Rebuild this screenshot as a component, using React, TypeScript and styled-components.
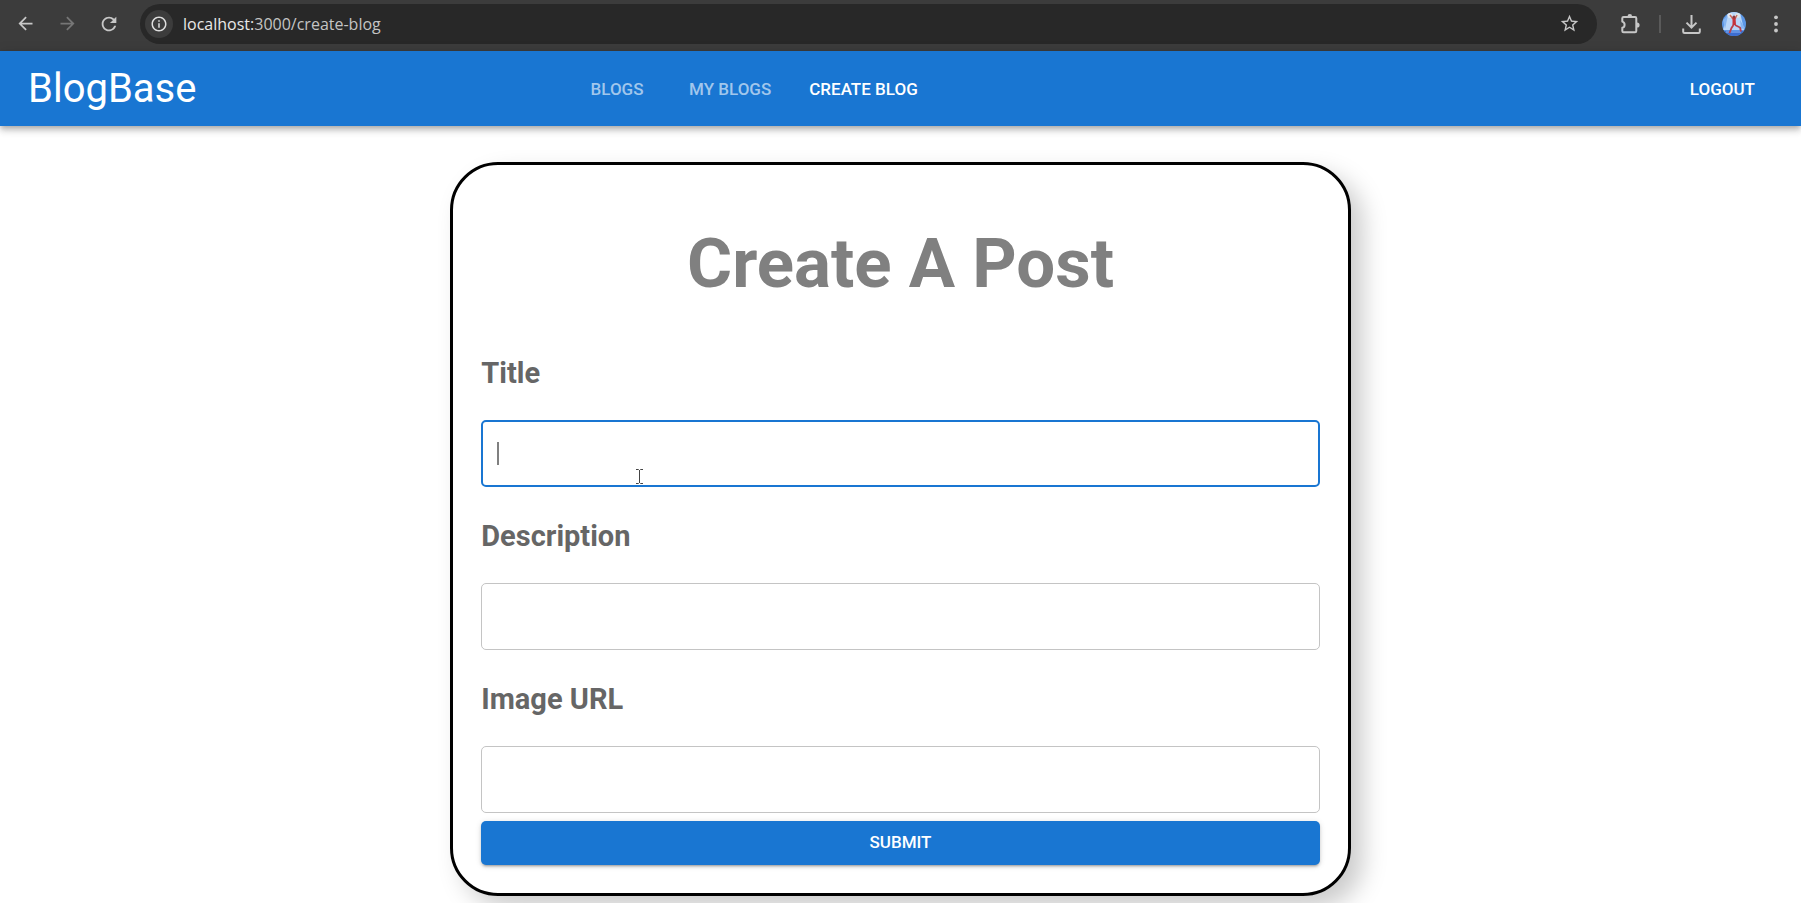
import React from "react";
import styled, { createGlobalStyle } from "styled-components";
import { MdArrowBack, MdArrowForward, MdInfoOutline, MdRefresh, MdStarOutline } from "react-icons/md";

const GlobalStyle = createGlobalStyle`
  *, *::before, *::after { box-sizing: border-box; }
  body {
    margin: 0;
    min-height: 100vh;
    background: #fff;
    font-family: Roboto, "Liberation Sans", sans-serif;
  }
`;

const BrowserBar = styled.div`
  display: flex;
  align-items: center;
  height: 51px;
  padding: 0 12px 4px 12px;
  background: #3c3c3c;
  color: #c7c7c7;
`;

const IconButton = styled.button<{ $dim?: boolean }>`
  display: flex;
  align-items: center;
  justify-content: center;
  width: 26px;
  height: 26px;
  padding: 0;
  border: 0;
  background: none;
  color: ${(p) => (p.$dim ? "#767676" : "#c7c7c7")};
`;

const NavButtons = styled.div`
  display: flex;
  gap: 16px;
`;

const AddressBar = styled.div`
  flex: 1;
  display: flex;
  align-items: center;
  height: 40px;
  margin: 0 20px 0 18px;
  padding: 0 15px 0 5px;
  border-radius: 20px;
  background: #282828;
`;

const SiteInfo = styled.button`
  display: flex;
  align-items: center;
  justify-content: center;
  width: 28px;
  height: 28px;
  padding: 0;
  border: 0;
  border-radius: 50%;
  background: #3c3c3c;
  color: #dedede;
`;

const Address = styled.div`
  flex: 1;
  margin-left: 10px;
  color: #c4c4c4;
  font-family: "Open Sans", "Noto Sans", sans-serif;
  font-size: 16px;
  line-height: 24px;

  span { color: #e8e8e8; }
`;

const Tools = styled.div`
  display: flex;
  align-items: center;
`;

const Divider = styled.span`
  width: 2px;
  height: 18px;
  margin: 0 18px 0 16px;
  background: #5a5a5a;
`;

const ToolGroup = styled.div`
  display: flex;
  gap: 16px;
`;

const AppBar = styled.header`
  position: relative;
  display: flex;
  align-items: center;
  height: 75px;
  padding: 0 28px;
  background: #1976d2;
  color: #fff;
  box-shadow: 0 2px 5px -1px rgba(0, 0, 0, 0.2), 0 5px 6px rgba(0, 0, 0, 0.14), 0 1px 12px rgba(0, 0, 0, 0.12);
`;

const Brand = styled.div`
  font-size: 40px;
  line-height: 50px;
`;

const Tabs = styled.nav`
  display: flex;
  margin: 0 auto;
`;

const Tab = styled.a<{ $active?: boolean }>`
  min-width: 106px;
  padding: 0 19px;
  color: ${(p) => (p.$active ? "#fff" : "rgba(255, 255, 255, 0.6)")};
  font-size: 17px;
  font-weight: 500;
  line-height: 56px;
  text-align: center;
  text-decoration: none;
  text-transform: uppercase;
`;

const Logout = styled.button`
  margin-left: auto;
  padding: 7px 18px;
  border: 0;
  border-radius: 5px;
  background: none;
  color: #fff;
  font-family: inherit;
  font-size: 17px;
  font-weight: 500;
  line-height: 28px;
  text-transform: uppercase;
`;

const PostForm = styled.form`
  display: flex;
  flex-direction: column;
  width: 50%;
  margin: 36px auto 0;
  padding: 28px;
  border: 3px solid #000;
  border-radius: 48px;
  box-shadow: 12px 12px 24px #ccc;
`;

const Heading = styled.h1`
  margin: 29px 0 47px;
  color: #808080;
  font-size: 69px;
  font-weight: 700;
  line-height: 84px;
  text-align: center;
`;

const Label = styled.label`
  margin-bottom: 27px;
  color: #666;
  font-size: 29px;
  font-weight: 700;
  line-height: 40px;
`;

const Field = styled.div`
  position: relative;
  display: flex;
  flex-direction: column;

  & + & { margin-top: 29px; }
`;

const Input = styled.input<{ $active?: boolean }>`
  width: 100%;
  height: 67px;
  padding: 0 16px;
  border: ${(p) => (p.$active ? "2px solid #1976d2" : "1px solid #c4c4c4")};
  border-radius: 5px;
  outline: none;
  background: #fff;
  font-family: inherit;
  font-size: 19px;
`;

const Caret = styled.span`
  position: absolute;
  left: 16px;
  bottom: 22px;
  width: 2px;
  height: 23px;
  background: #808080;
`;

const Pointer = styled.svg`
  position: absolute;
  left: 154px;
  bottom: 2px;
`;

const Submit = styled.button`
  height: 44px;
  margin-top: 8px;
  padding: 0 19px 2px;
  border: 0;
  border-radius: 5px;
  background: #1976d2;
  color: #fff;
  font-family: inherit;
  font-size: 17px;
  font-weight: 500;
  text-transform: uppercase;
  box-shadow: 0 3px 2px -2px rgba(0, 0, 0, 0.2), 0 2px 3px rgba(0, 0, 0, 0.14), 0 1px 6px rgba(0, 0, 0, 0.12);
`;

const PuzzleIcon = () => (
  <svg width="24" height="24" viewBox="0 0 24 24" fill="none">
    <path
      d="M5.6 5H17a1.3 1.3 0 0 1 1.3 1.3V19a1.3 1.3 0 0 1-1.3 1.3H5.6A1.3 1.3 0 0 1 4.3 19v-3.2C5.8 15.4 6.6 14.200 6.600 12.700S5.800 10 4.300 9.600V6.300A1.300 1.300 0 0 1 5.600 5z"
      stroke="currentColor"
      strokeWidth="2"
      strokeLinejoin="round"
    />
    <path d="M9.500 4.400a2.300 2.300 0 0 1 4.600 0zM19 10.400a2.600 2.600 0 0 1 0 5.200z" fill="currentColor" />
  </svg>
);

const DownloadIcon = () => (
  <svg width="24" height="24" viewBox="0 0 24 24" fill="none" stroke="currentColor" strokeWidth="2">
    <path d="M11.500 3v12M6.500 10.600l5 5 5-5M3.200 16.500v3.200a1.300 1.300 0 0 0 1.300 1.300h14a1.300 1.300 0 0 0 1.300-1.300v-3.200" />
  </svg>
);

const DotsIcon = () => (
  <svg width="24" height="24" viewBox="0 0 24 24" fill="currentColor">
    <circle cx="12" cy="5.300" r="1.900" />
    <circle cx="12" cy="12" r="1.900" />
    <circle cx="12" cy="18.500" r="1.900" />
  </svg>
);

const Avatar = () => (
  <svg width="24" height="24" viewBox="0 0 24 24">
    <clipPath id="avatar">
      <circle cx="12" cy="12" r="12" />
    </clipPath>
    <g clipPath="url(#avatar)">
      <rect width="24" height="24" fill="#5c97e6" />
      <path d="M6 0h12l4 18H1z" fill="#b9d6f8" />
      <path d="M1 8l5-5-3 14zM18 8l5 8-4 1z" fill="#85b5f2" />
      <path d="M0 19h24v5H0z" fill="#3c6dd0" />
      <path d="M4 20h15" stroke="#8ab6f3" />
      <circle cx="8" cy="3.500" r="2.500" fill="#e5e9ef" />
      <circle cx="15.500" cy="3.500" r="2.500" fill="#dce5e8" />
      <path d="M8 3l3 4M15 3l-2 4" stroke="#c86c62" strokeWidth="1.500" />
      <path d="M10.500 5.500h3l.5 7.500h-3.500z" fill="#c6333b" />
      <path d="M11.500 13l-2 3-2 5M13 13l5 2.500 1 4" fill="none" stroke="#b93f4b" strokeWidth="1.800" />
      <circle cx="12" cy="5" r="1.500" fill="#8b3c42" />
    </g>
  </svg>
);

const fields = [
  { id: "title", label: "Title", active: true },
  { id: "description", label: "Description", active: false },
  { id: "imageUrl", label: "Image URL", active: false },
];

export default function App() {
  return (
    <>
      <GlobalStyle />
      <BrowserBar>
        <NavButtons>
          <IconButton aria-label="Back"><MdArrowBack size={21} /></IconButton>
          <IconButton aria-label="Forward" $dim><MdArrowForward size={21} /></IconButton>
          <IconButton aria-label="Reload"><MdRefresh size={22} /></IconButton>
        </NavButtons>
        <AddressBar>
          <SiteInfo aria-label="Site information"><MdInfoOutline size={18} /></SiteInfo>
          <Address><span>localhost:</span>3000/create-blog</Address>
          <IconButton aria-label="Bookmark"><MdStarOutline size={21} /></IconButton>
        </AddressBar>
        <Tools>
          <IconButton aria-label="Extensions"><PuzzleIcon /></IconButton>
          <Divider />
          <ToolGroup>
            <IconButton aria-label="Downloads"><DownloadIcon /></IconButton>
            <IconButton aria-label="Profile"><Avatar /></IconButton>
            <IconButton aria-label="Menu"><DotsIcon /></IconButton>
          </ToolGroup>
        </Tools>
      </BrowserBar>
      <AppBar>
        <Brand>BlogBase</Brand>
        <Tabs>
          <Tab href="#blogs">Blogs</Tab>
          <Tab href="#my-blogs">My Blogs</Tab>
          <Tab href="#create-blog" $active aria-current="page">Create Blog</Tab>
        </Tabs>
        <Logout type="button">Logout</Logout>
      </AppBar>
      <main>
        <PostForm onSubmit={(e) => e.preventDefault()}>
          <Heading>Create A Post</Heading>
          {fields.map((f) => (
            <Field key={f.id}>
              <Label htmlFor={f.id}>{f.label}</Label>
              <Input id={f.id} name={f.id} type="text" $active={f.active} />
              {f.active && (
                <>
                  <Caret />
                  <Pointer width="9" height="17" viewBox="0 0 9 17" fill="none" stroke="#444">
                    <path d="M1 1.500h2.500l1 1 1-1H8M1 15.500h2.500l1-1 1 1H8M4.500 2v13" />
                  </Pointer>
                </>
              )}
            </Field>
          ))}
          <Submit type="submit">Submit</Submit>
        </PostForm>
      </main>
    </>
  );
}
